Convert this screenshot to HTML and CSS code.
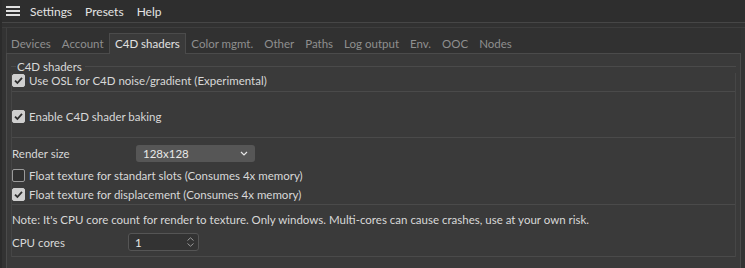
FILE: index.html
```
<!DOCTYPE html>
<html>
    <head>
        <meta name="viewport" content="width=device-width">
        <title>Settings</title>
        <link rel="stylesheet" href="styles.css">
    </head>
    <body>
        <div class="menubar">
            <svg class="burger" width="14" height="12" viewBox="0 0 14 12">
                <rect x="0" y="0" width="14" height="2" fill="#e0e0e0"/>
                <rect x="0" y="4" width="14" height="2" fill="#e0e0e0"/>
                <rect x="0" y="8" width="14" height="2" fill="#e0e0e0"/>
            </svg>
            <span class="menu-item">Settings</span>
            <span class="menu-item">Presets</span>
            <span class="menu-item">Help</span>
        </div>
        <div class="strip"></div>

        <div class="tabwidget">
            <div class="tabbar">
                <div class="tab first">Devices</div>
                <div class="tab">Account</div>
                <div class="tab active">C4D shaders</div>
                <div class="tab">Color mgmt.</div>
                <div class="tab">Other</div>
                <div class="tab">Paths</div>
                <div class="tab">Log output</div>
                <div class="tab">Env.</div>
                <div class="tab">OOC</div>
                <div class="tab">Nodes</div>
            </div>
            <div class="pane">
                <div class="group">
                    <div class="group-head"><span class="group-title">C4D shaders</span></div>
                    <div class="group-body">
                        <div class="section sec1">
                            <label class="check-row"><span class="box on"><svg width="11" height="11" viewBox="0 0 11 11"><path d="M2 5.6 L4.4 8 L9 2.8" fill="none" stroke="#2e2e2e" stroke-width="1.8"/></svg></span>Use OSL for C4D noise/gradient (Experimental)</label>
                        </div>
                        <div class="section sec2">
                            <label class="check-row"><span class="box on"><svg width="11" height="11" viewBox="0 0 11 11"><path d="M2 5.6 L4.4 8 L9 2.8" fill="none" stroke="#2e2e2e" stroke-width="1.8"/></svg></span>Enable C4D shader baking</label>
                        </div>
                        <div class="section sec3">
                            <div class="field-row">
                                <span class="field-label wide">Render size</span>
                                <div class="dropdown">
                                    <span>128x128</span>
                                    <svg width="8" height="5" viewBox="0 0 8 5"><path d="M1 1 L4 4 L7 1" fill="none" stroke="#e6e6e6" stroke-width="1.2"/></svg>
                                </div>
                            </div>
                            <label class="check-row gap6"><span class="box"></span>Float texture for standart slots (Consumes 4x memory)</label>
                            <label class="check-row gap5"><span class="box on"><svg width="11" height="11" viewBox="0 0 11 11"><path d="M2 5.6 L4.4 8 L9 2.8" fill="none" stroke="#2e2e2e" stroke-width="1.8"/></svg></span>Float texture for displacement (Consumes 4x memory)</label>
                        </div>
                        <div class="section sec4">
                            <div class="note">Note: It's CPU core count for render to texture. Only windows. Multi-cores can cause crashes, use at your own risk.</div>
                            <div class="field-row cpu">
                                <span class="field-label">CPU cores</span>
                                <div class="spinbox">
                                    <span>1</span>
                                    <span class="arrows">
                                        <svg width="7" height="4" viewBox="0 0 7 4"><path d="M0.5 3.5 L3.5 0.8 L6.5 3.5" fill="none" stroke="#9a9a9a" stroke-width="1"/></svg>
                                        <svg width="7" height="4" viewBox="0 0 7 4"><path d="M0.5 0.5 L3.5 3.2 L6.5 0.5" fill="none" stroke="#9a9a9a" stroke-width="1"/></svg>
                                    </span>
                                </div>
                            </div>
                        </div>
                    </div>
                </div>
            </div>
        </div>
    </body>
</html>
```

FILE: styles.css
```
body{
    margin:0;
    background:#333333;
    color:#d8d8d8;
    font-family:Lato,"Noto Sans",sans-serif;
    font-size:11.5px;
    height:268px;
    overflow:hidden;
    border-left:2px solid #2b2b2b;
}

.menubar{display:flex;align-items:center;height:22px;background:#2e2e2e;margin-left:-2px;padding-left:6px;font-size:12px}
.burger{margin-right:10px;margin-top:1px}
.menu-item{margin-right:13px;color:#e4e4e4}
.strip{height:4px;border-top:1px solid #464646;border-bottom:1px solid #3d3d3d;background:#313131;margin-left:-2px}

.tabwidget{margin-left:4px;margin-right:4px}
.tabbar{display:flex;height:25px;align-items:flex-end;border-left:1px solid #3f3f3f;background:#313131}
.tab{height:20px;line-height:20px;padding:0 5.5px;color:#8f8f8f;margin-bottom:-1px}
.tab.first{padding-left:4px}
.tab.active{background:#3a3a3a;color:#e2e2e2;border:1px solid #4b4b4b;border-bottom:none;padding:0 5px 0 5px;height:20px;position:relative;z-index:1}

.pane{background:#3a3a3a;border:1px solid #4b4b4b;height:220px;padding:0 4px}

.group{margin-top:5px}
.group-head{display:flex;align-items:center;height:14px}
.group-head::before{content:"";width:5px;height:1px;background:#4a4a4a;margin-right:1px}
.group-head::after{content:"";flex:1;height:1px;background:#4a4a4a;margin-left:3px}
.group-title{color:#d8d8d8}
.group-body{border-left:1px solid #464646;border-right:1px solid #464646}

.section{border-bottom:1px solid #4a4a4a}
.sec1{padding-bottom:4px}
.sec2{padding-top:17px;padding-bottom:14px}
.sec3{padding-top:7px;padding-bottom:3px}
.sec4{padding-top:8px;padding-bottom:5px}

.check-row{display:flex;align-items:center;height:14px;white-space:nowrap}
.check-row.gap6{margin-top:6px}
.check-row.gap5{margin-top:5px}
.box{width:11px;height:11px;border:1px solid #9a9a9a;border-radius:2px;background:#2f2f2f;margin-right:4px;display:flex;align-items:center;justify-content:center}
.box.on{background:#cfcfcf;border-color:#cfcfcf}

.field-row{display:flex;align-items:center}
.field-label{width:116px}
.field-label.wide{width:124px}
.dropdown{width:105px;height:17px;background:#565656;border-radius:3px;display:flex;align-items:center;justify-content:space-between;padding:0 7px;color:#e8e8e8}

.note{height:14px;line-height:14px;white-space:nowrap}
.field-row.cpu{margin-top:6px}
.spinbox{width:59px;height:16px;background:#333333;border:1px solid #555555;border-radius:3px;display:flex;align-items:center;justify-content:space-between;padding:0 4px 0 6px;color:#e8e8e8}
.arrows{display:flex;flex-direction:column;gap:2px}
.arrows svg{display:block}
```
